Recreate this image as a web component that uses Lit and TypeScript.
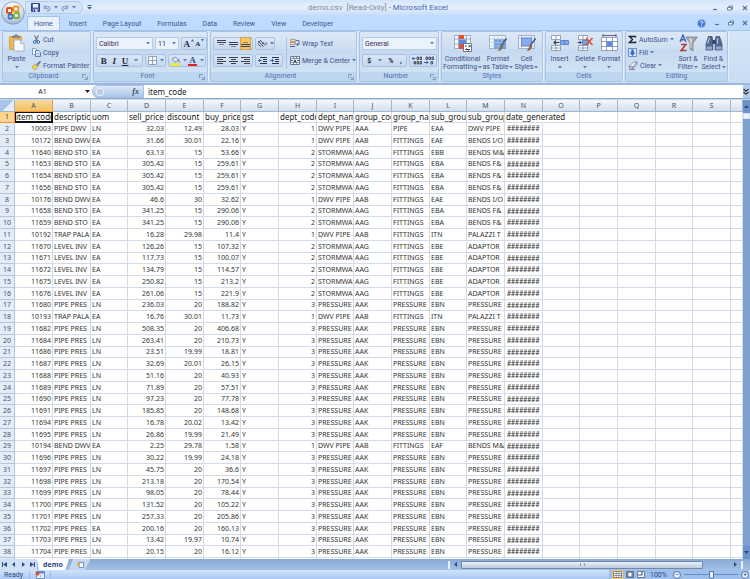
import { LitElement, html, svg, css, nothing } from "lit";
import type { SVGTemplateResult } from "lit";
import { customElement, property } from "lit/decorators.js";
import { classMap } from "lit/directives/class-map.js";

const icon = (w: number, h: number, body: SVGTemplateResult, vb = `0 0 ${w} ${h}`) =>
  html`<svg class="ic" width=${w} height=${h} viewBox=${vb} aria-hidden="true">${body}</svg>`;

const caret = icon(4, 3, svg`<path d="M0 0h4L2 2.6z" fill="#5c7fb5"/>`);
const launcher = icon(6, 6, svg`<path d="M.5 4V.5H4M2.500 2.500l2 2M5.500 2.500v3h-3" fill="none" stroke="#7391bd" stroke-width=".9"/>`);

const icons = {
  office: icon(24, 24, svg`
    <defs><radialGradient id="orb" cx=".5" cy=".25" r=".8"><stop offset="0" stop-color="#fff"/><stop offset=".6" stop-color="#d3dbe8"/><stop offset="1" stop-color="#8fa6c6"/></radialGradient></defs>
    <circle cx="12" cy="12" r="11.300" fill="url(#orb)" stroke="#8298b8" stroke-width=".8"/>
    <rect x="6" y="7" width="5" height="5" rx="1" fill="none" stroke="#e0501c" stroke-width="2"/>
    <rect x="12.500" y="5.500" width="5" height="5" rx="1" fill="none" stroke="#f0952a" stroke-width="1.800"/>
    <rect x="7.500" y="13.500" width="4" height="4" rx="1" fill="none" stroke="#2f78c8" stroke-width="1.800"/>
    <rect x="13" y="12" width="5" height="5" rx="1" fill="none" stroke="#7db03a" stroke-width="1.800"/>
    <path d="M11 10.500h2.500v2.500H11z" fill="#fbd64c"/>`),
  save: icon(9, 9, svg`<path d="M.5.5h8v8h-8z" fill="#5364b8" stroke="#343f8e"/><path d="M2 1h5v3.500H2z" fill="#eef3ff"/><path d="M2.500 6h4v3h-4z" fill="#cdd6ee"/><path d="M3 6.500h1.200V9H3z" fill="#2b3576"/>`),
  undo: icon(8, 8, svg`<path d="M1.500 1v3.500H5M1.800 4C3 1.800 6.700 1.800 6.700 4.500 6.700 6 5.500 7 4 7.200" fill="none" stroke="#93a9cd" stroke-width="1.400"/>`),
  redo: icon(8, 8, svg`<path d="M6.500 1v3.500H3M6.200 4C5 1.800 1.300 1.800 1.300 4.500 1.300 6 2 6.800 3 7.200" fill="none" stroke="#93a9cd" stroke-width="1.400"/>`),
  more: icon(5, 5, svg`<path d="M.5.5h4" stroke="#3c5f9c"/><path d="M0 2h5L2.500 4.600z" fill="#3c5f9c"/>`),
  min: icon(6, 6, svg`<path d="M1 4.500h4" stroke="#5b6f93" stroke-width="1.200"/>`),
  restore: icon(6, 6, svg`<path d="M2 2V1h3.500v3H4.500" fill="none" stroke="#5b6f93" stroke-width=".8"/><path d="M.5 2.500h4v2.500h-4z" fill="#fff" stroke="#5b6f93" stroke-width=".9"/>`),
  close: icon(6, 6, svg`<path d="M1 1l4 4M5 1L1 5" stroke="#5b6f93" stroke-width="1.100"/>`),
  help: icon(9, 9, svg`<circle cx="4.500" cy="4.500" r="4" fill="#3f74d0" stroke="#9dbdec" stroke-width=".8"/><path d="M3.100 3.500c.2-1.600 2.800-1.500 2.700 0 0 .9-1.300 1-1.300 1.900M4.500 6.200v1" fill="none" stroke="#fff" stroke-width="1"/>`),
  paste: icon(17, 18, svg`
    <path d="M1.500 2.500h12v13h-12z" fill="#eeb458" stroke="#d9a24e"/>
    <path d="M4.500 3.500V2h2c0-2 3-2 3 0h2v1.500z" fill="#8d97a8" stroke="#5e6778" stroke-width=".6"/>
    <path d="M6 6h6.500L16 9.500V17H6z" fill="#f6f9ff" stroke="#93a5c6" stroke-width=".7"/>
    <path d="M12.500 6v3.500H16" fill="#d5e1f4" stroke="#93a5c6" stroke-width=".7"/>`),
  cut: icon(9, 9, svg`<path d="M2.500.5L5.500 6M6.500.5L3.500 6" stroke="#5a6a8c" stroke-width="1.100"/><circle cx="2.700" cy="7" r="1.400" fill="none" stroke="#3f67b4"/><circle cx="6.200" cy="7" r="1.400" fill="none" stroke="#3f67b4"/>`),
  copy: icon(9, 9, svg`<path d="M.5.5h3l1.500 1.500v4.500H.5z" fill="#fff" stroke="#5f86c6" stroke-width=".8"/><path d="M3.500 2.500h3L8.500 4.500v4h-5z" fill="#dfeafc" stroke="#3f6ab4" stroke-width=".8"/><path d="M4.500 5.500h3M4.500 7h3" stroke="#6d94d2" stroke-width=".6"/>`),
  painter: icon(9, 9, svg`<path d="M0 5.500L4 3l2 2.500L3.500 9C2 8.500.5 7.500 0 5.500z" fill="#f0cc58" stroke="#a78730" stroke-width=".6"/><path d="M4 3l1.500-1L7 4 6 5.500z" fill="#77829a"/><path d="M6 3l2.500-2.800" stroke="#4d5e83" stroke-width="1.400"/>`),
  borders: icon(9, 9, svg`<path d="M.5.5h8v8h-8z" fill="#f3f7fd" stroke="#8391ad" stroke-width=".8"/><path d="M4.500 0v9M0 4.500h9" stroke="#8391ad" stroke-width=".8"/>`),
  fill: icon(10, 10, svg`<path d="M2 3l3.500-2L8.500 4 5 6.500z" fill="#dde7f5" stroke="#63789d" stroke-width=".8"/><path d="M8 3.500c1.200.7 1.500 1.500 1 3" fill="none" stroke="#4c6694"/><path d="M0 7.500h10v2H0z" fill="#f8f000"/>`),
  alignTop: icon(9, 9, svg`<path d="M0 1.500h9M0 3.500h9" stroke="#3c4250" stroke-width="1.100"/><path d="M2 5.500h5" stroke="#7d8594"/>`),
  alignMid: icon(9, 9, svg`<path d="M0 3.500h9M0 5.500h9" stroke="#3c4250" stroke-width="1.200"/><path d="M2 7.500h5" stroke="#7d8594"/>`),
  alignBot: icon(9, 9, svg`<path d="M0 5.500h9M0 7.500h9" stroke="#3c4250" stroke-width="1.200"/><path d="M2 3.500h5" stroke="#7d8594"/>`),
  left: icon(9, 9, svg`<path d="M0 1.500h9M0 3.500h6M0 5.500h9M0 7.500h6" stroke="#3c4250"/>`),
  center: icon(9, 9, svg`<path d="M0 1.500h9M2 3.500h5M0 5.500h9M2 7.500h5" stroke="#3c4250"/>`),
  right: icon(9, 9, svg`<path d="M0 1.500h9M3 3.500h6M0 5.500h9M3 7.500h6" stroke="#3c4250"/>`),
  orient: icon(10, 9, svg`<path d="M1 2l5 5M3 1l4.500 4.500M1 5l2.500 2.500M1 4.500L4 1M3.500 6.500l3-3" stroke="#3f4858" stroke-width=".9"/><path d="M5 8.500L9.500 4M9.500 6V4H7.500" fill="none" stroke="#6a7384" stroke-width=".8"/>`),
  outdent: icon(10, 9, svg`<path d="M2 1.500h7M5 3.500h4M5 5.500h4M2 7.500h7" stroke="#2e3544"/><path d="M4 4.500H.5M2 3L.5 4.500 2 6" fill="none" stroke="#2f62b8"/>`),
  indent: icon(10, 9, svg`<path d="M2 1.500h7M5 3.500h4M5 5.500h4M2 7.500h7" stroke="#2e3544"/><path d="M0 4.500h3.500M2 3l1.500 1.500L2 6" fill="none" stroke="#2f62b8"/>`),
  wrap: icon(10, 9, svg`<path d="M.5.5h5v2h-5zM.5 3.500h5v2h-5z" fill="#f4d3ae" stroke="#a9826b" stroke-width=".7"/><path d="M0 7.500h5" stroke="#56657f"/><path d="M6 1.500h3v4H7M8 4L6.500 5.500 8 7" fill="none" stroke="#3c68b4" stroke-width=".9"/>`),
  merge: icon(10, 9, svg`<path d="M.5.5h9v8h-9z" fill="#f6f9fe" stroke="#56657f" stroke-width=".8"/><path d="M0 2.500h10M0 6.500h10M3.500 0v2.500M6.500 0v2.500M3.500 6.500V9M6.500 6.500V9" stroke="#56657f" stroke-width=".7"/><path d="M.5 4.500h2.500M7 4.500h2.500" stroke="#2f62b8"/><path d="M5 3l1.500 3h-3z" fill="#2e3544"/>`),
  incDec: icon(10, 9, svg`<path d="M0 2.500h3.500M1.500 1L0 2.500 1.500 4" fill="none" stroke="#2f62b8"/><path d="M5 1h1.500v2.500H5zM8 1h1.500v2.500H8zM2 5.500h1.500V8H2zM5 5.500h1.500V8H5zM8 5.500h1.500V8H8z" fill="none" stroke="#3c4250" stroke-width=".9"/>`),
  decDec: icon(10, 9, svg`<path d="M0 6.500h4M2.500 5L4 6.500 2.500 8" fill="none" stroke="#2f62b8"/><path d="M2 1h1.500v2.500H2zM5 1h1.500v2.500H5zM8 1h1.500v2.500H8zM7 5.500h1.500V8H7z" fill="none" stroke="#3c4250" stroke-width=".9"/>`),
  cond: icon(18, 18, svg`<path d="M.5 1.500h16v13H.5z" fill="#f5f8fd" stroke="#8f9fbd" stroke-width=".8"/><path d="M4.500 1v14M12.500 1v14M0 5h17M0 10h17" stroke="#8f9fbd" stroke-width=".8"/><path d="M5 1h5v4H5zM5 10h6v5H5z" fill="#e5502f"/><path d="M5 5.500h7V10H5z" fill="#5c8be0"/><path d="M9.500 9.500h8v8h-8z" fill="#fff" stroke="#4e5b74" stroke-width=".8"/><path d="M11 12h2M14.500 11l2 1-2 1M11 15.500h5M12 14.500l3 2" fill="none" stroke="#333c4e" stroke-width=".9"/>`),
  fmtTable: icon(18, 18, svg`<path d="M.5 1.500h16v13H.5z" fill="#f5f8fd" stroke="#8f9fbd" stroke-width=".8"/><path d="M5 5h12v10H5z" fill="#6f9be6"/><path d="M5 1v14M9 1v14M13 1v14M0 5h17M0 8.500h17M0 12h17" stroke="#b3c4e2" stroke-width=".8"/><path d="M17.500 4.500L12 12" stroke="#53617e" stroke-width="1.800"/><path d="M13 10.500l1.500 1.500c-1 3.500-3 5-6 5 2-1.500 2-4.500 4.500-6.500z" fill="#8b6a48"/>`),
  cellStyles: icon(18, 18, svg`<path d="M.5 1.500h16v13H.5z" fill="#f5f8fd" stroke="#8f9fbd" stroke-width=".8"/><path d="M3.500 1v14M13.500 1v14M0 4h17M0 12h17" stroke="#a9b8d3" stroke-width=".8"/><path d="M3.500 4h10v8h-10z" fill="#85aaf0" stroke="#5c80c8" stroke-width=".8"/><path d="M17.500 4.500L12 12" stroke="#53617e" stroke-width="1.800"/><path d="M13 10.500l1.500 1.500c-1 3.500-3 5-6 5 2-1.500 2-4.500 4.500-6.500z" fill="#8b6a48"/>`),
  insert: icon(18, 18, svg`<path d="M.5 1.500h9v4h-9zM.5 11.500h9v5h-9z" fill="#fff" stroke="#7f8da8" stroke-width=".8"/><path d="M5 1.500v4M5 11.500v5M.5 14h9" stroke="#7f8da8" stroke-width=".8"/><path d="M9.500 6.500h8v4h-8z" fill="#7ba5ee" stroke="#4f78c2" stroke-width=".8"/><path d="M13.500 6.500v4" stroke="#4f78c2" stroke-width=".6"/><path d="M8.500 8.500H3M5 6.500L3 8.500l2 2" fill="none" stroke="#3c4250" stroke-width="1.100"/>`),
  delete: icon(18, 18, svg`<path d="M2.500 1.500h9v4h-9zM2.500 11.500h9v5h-9z" fill="#fff" stroke="#7f8da8" stroke-width=".8"/><path d="M7 1.500v4M7 11.500v5M2.500 14h9" stroke="#7f8da8" stroke-width=".8"/><path d="M6.500 6.500h6v4h-6z" fill="#7ba5ee" stroke="#4f78c2" stroke-width=".8"/><path d="M1.500 8.500h4M3.500 7l2 1.500-2 1.500" fill="none" stroke="#3c4250"/><path d="M10 4l6.500 7M16.500 4L10 11" stroke="#e24a2c" stroke-width="1.500"/>`),
  format: icon(19, 18, svg`<path d="M1.500 3.500h16v13h-16z" fill="#fff" stroke="#7f8da8" stroke-width=".8"/><path d="M6.500 3v14M12.500 3v14M1 7.500h17M1 12.500h17" stroke="#7f8da8" stroke-width=".8"/><path d="M6.500 7.500h6v5h-6z" fill="#5c8be0"/><path d="M3 1.500h13M3 0v3M16 0v3" stroke="#4e5b74" stroke-width=".9"/>`),
  sigma: icon(9, 9, svg`<path d="M7.500 2.500v-1h-6L4.500 4.500 1.500 7.500h6v-1" fill="none" stroke="#20262f" stroke-width="1.400"/>`),
  fillDown: icon(9, 9, svg`<path d="M.5.500h8v8h-8z" fill="#dce8fb" stroke="#5476b4" stroke-width=".8"/><path d="M3.200 1.500h2.600V4.500h1.700L4.500 8 1.500 4.500h1.700z" fill="#2f6bd0"/>`),
  clear: icon(10, 9, svg`<path d="M1 5.500L5.500 1h3.500L4.500 6z" fill="#f7f8fb" stroke="#6d7890" stroke-width=".8"/><path d="M1 5.500L4.500 6v2H2z" fill="#d7dde8" stroke="#6d7890" stroke-width=".7"/><path d="M4.500 8L9 3.500V1M1 8.500h6" fill="none" stroke="#6d7890" stroke-width=".8"/>`),
  sort: icon(19, 18, svg`<path d="M1 8l3-7 3 7M2 5.700h4" fill="none" stroke="#3b62b4" stroke-width="1.400"/><path d="M2 10.500h5L2 16.500h5.500" fill="none" stroke="#b23a32" stroke-width="1.500"/><path d="M7 3h11.500l-4.500 6v8l-3-2V9z" fill="#a9a6a6" stroke="#77757a" stroke-width=".7"/><path d="M10 4.500h3L12.500 9v5.500l-1-1V8.500z" fill="#e0dfe0"/>`),
  find: icon(18, 18, svg`<path d="M3.500 2.500h3.500l.8 4v9.500H1V10z" fill="#54688f" stroke="#33456b" stroke-width=".7"/><path d="M11 2.500h3.500L17 10v6h-6.800V6.500z" fill="#54688f" stroke="#33456b" stroke-width=".7"/><path d="M7.500 6h3v4h-3z" fill="#33456b"/><path d="M2.500 9.500L4.500 4M12.500 9.500L12.500 4" stroke="#a9bfe4" stroke-width="1.300"/><path d="M1.500 12.500h5.500v3H1.500zM11 12.500h5.500v3H11z" fill="#92aad4"/>`),
  expand: icon(6, 8, svg`<path d="M.5 1L3 3.200 5.500 1M.5 4L3 6.200 5.500 4" fill="none" stroke="#333" stroke-width="1.200"/>`),
  newSheet: icon(10, 8, svg`<path d="M3.500 1.500h5v5h-4z" fill="#fff" stroke="#5b7ab0" stroke-width=".8"/><path d="M1 3l2-.6L3.600.500l.9 1.900 2 .6-2 .8-.9 2L2.800 3.900z" fill="#f0a238"/>`),
  macro: icon(10, 8, svg`<path d="M1.500.5h8v7h-8z" fill="#f4f8ff" stroke="#5b7ab0" stroke-width=".8"/><path d="M1.500.5h8v2h-8z" fill="#5b86cc"/><path d="M5.500 3v4.500M2 5h7" stroke="#9db3d8" stroke-width=".6"/><circle cx="2.500" cy="2.500" r="2" fill="#dd4f38"/>`),
  viewNormal: icon(9, 7, svg`<path d="M.5.5h8v6h-8z" fill="#fff" stroke="#6a7691" stroke-width=".8"/><path d="M3.200 0v7M5.900 0v7M0 2.500h9M0 4.500h9" stroke="#6a7691" stroke-width=".7"/>`),
  viewLayout: icon(8, 7, svg`<path d="M.5.500h7v6h-7z" fill="#7885a0" stroke="#56617b" stroke-width=".8"/><path d="M2.500 1.800h3v3.500h-3z" fill="#fff"/>`),
  viewBreak: icon(8, 7, svg`<path d="M.5.500h7v6h-7z" fill="#fff" stroke="#56617b" stroke-width=".8"/><path d="M.5 4h4.500V.5" fill="none" stroke="#56617b" stroke-width="1.200"/>`),
};

const arrow = (d: string) => icon(5, 5, svg`<path d=${d} fill="#274b8a"/>`);

/* item, description, uom, sell, discount, buy, dept, dept name, group, group name, sub group, sub group name */
const DWV = "DWV PIPE";
const source = `
10003,PIPE DWV,LN,32.03,12.49,28.03,1,${DWV},AAA,PIPE,EAA,DWV PIPE
10172,BEND DWV,EA,31.66,30.01,22.16,1,${DWV},AAB,FITTINGS,EAE,BENDS I/O
11640,BEND STO,EA,63.13,15,53.66,2,STORMWA,AAG,FITTINGS,EBB,BENDS M&F
11653,BEND STO,EA,305.42,15,259.61,2,STORMWA,AAG,FITTINGS,EBA,BENDS F&
11654,BEND STO,EA,305.42,15,259.61,2,STORMWA,AAG,FITTINGS,EBA,BENDS F&
11656,BEND STO,EA,305.42,15,259.61,2,STORMWA,AAG,FITTINGS,EBA,BENDS F&
10176,BEND DWV,EA,46.6,30,32.62,1,${DWV},AAB,FITTINGS,EAE,BENDS I/O
11658,BEND STO,EA,341.25,15,290.06,2,STORMWA,AAG,FITTINGS,EBA,BENDS F&
11659,BEND STO,EA,341.25,15,290.06,2,STORMWA,AAG,FITTINGS,EBA,BENDS F&
10192,TRAP PALA,EA,16.28,29.98,11.4,1,${DWV},AAB,FITTINGS,ITN,PALAZZI T
11670,LEVEL INV,EA,126.26,15,107.32,2,STORMWA,AAG,FITTINGS,EBE,ADAPTOR
11671,LEVEL INV,EA,117.73,15,100.07,2,STORMWA,AAG,FITTINGS,EBE,ADAPTOR
11672,LEVEL INV,EA,134.79,15,114.57,2,STORMWA,AAG,FITTINGS,EBE,ADAPTOR
11675,LEVEL INV,EA,250.82,15,213.2,2,STORMWA,AAG,FITTINGS,EBE,ADAPTOR
11676,LEVEL INV,EA,261.06,15,221.9,2,STORMWA,AAG,FITTINGS,EBE,ADAPTOR
11680,PIPE PRES,LN,236.03,20,188.82
10193,TRAP PALA,EA,16.76,30.01,11.73,1,${DWV},AAB,FITTINGS,ITN,PALAZZI T
11682,PIPE PRES,LN,508.35,20,406.68
11684,PIPE PRES,LN,263.41,20,210.73
11686,PIPE PRES,LN,23.51,19.99,18.81
11687,PIPE PRES,LN,32.69,20.01,26.15
11688,PIPE PRES,LN,51.16,20,40.93
11689,PIPE PRES,LN,71.89,20,57.51
11690,PIPE PRES,LN,97.23,20,77.78
11691,PIPE PRES,LN,185.85,20,148.68
11694,PIPE PRES,LN,16.78,20.02,13.42
11695,PIPE PRES,LN,26.86,19.99,21.49
10194,BEND DWV,EA,2.25,29.78,1.58,1,${DWV},AAB,FITTINGS,EAF,BENDS M&F
11696,PIPE PRES,LN,30.22,19.99,24.18
11697,PIPE PRES,LN,45.75,20,36.6
11698,PIPE PRES,LN,213.18,20,170.54
11699,PIPE PRES,LN,98.05,20,78.44
11700,PIPE PRES,LN,131.52,20,105.22
11701,PIPE PRES,LN,257.33,20,205.86
11702,PIPE PRES,EA,200.16,20,160.13
11703,PIPE PRES,LN,13.42,19.97,10.74
11704,PIPE PRES,LN,20.15,20,16.12`;

const PRESSURE = ["3", "PRESSURE", "AAK", "PRESSURE", "EBN", "PRESSURE"];
const records = source.trim().split("\n").map((line) => {
  const f = line.split(",");
  const rest = f.length > 6 ? f.slice(6) : PRESSURE;
  return [...f.slice(0, 6), "Y", ...rest, "########"];
});
const fields = ["item_code", "description", "uom", "sell_price", "discount", "buy_price", "gst", "dept_code", "dept_name", "group_code", "group_name", "sub_group", "sub_group"];
const numeric = new Set([0, 3, 4, 5, 7]);
const letters = "ABCDEFGHIJKLMNOPQRS".split("");

@customElement("sheet-grid")
class SheetGrid extends LitElement {
  static styles = css`
    :host { display: block; overflow: hidden; background: #fff; font: 7px/11px "Noto Sans", sans-serif; color: #333; }
    table { table-layout: fixed; border-collapse: separate; border-spacing: 0; width: 100%; }
    .c-head { width: 15px; }
    .c-wide { width: 38px; }
    .c-narrow { width: 37px; }
    th, td { box-sizing: border-box; padding: 0 0 0 1px; height: 12px; overflow: hidden; white-space: nowrap; text-align: left; border-right: 1px solid #d3dbea; border-bottom: 1px solid #d3dbea; }
    tbody tr:nth-child(4n + 1) > * { height: 11px; line-height: 10px; }
    th { font-weight: 400; text-align: center; padding: 0; color: #44546c; background: #e4ecf7; border-color: #b4c6de; }
    thead th { background: linear-gradient(#f4f8fd, #d5deec); border-color: #9eb6ce; }
    .corner { background: linear-gradient(135deg, #a9c4e9 55%, #e6eefa 55%); }
    thead .on { background: linear-gradient(#f9d99f, #f1c15f); border-color: #f29536; }
    tbody .on { background: #ffd58d; border-color: #f29536; }
    .num { text-align: right; padding-right: 1px; }
    .date { font-family: Lato, sans-serif; padding-left: 2px; }
    .first td { font-size: 8px; color: #222; }
    .first td.current { box-shadow: inset 0 0 0 1px #111; border-color: #111; }
  `;
  render() {
    return html`<table aria-label="demo">
      <colgroup><col class="c-head">${letters.map((_, i) => html`<col class=${i % 3 === 2 ? "c-narrow" : "c-wide"}>`)}<col></colgroup>
      <thead><tr><th class="corner"></th>${letters.map((l, i) => html`<th scope="col" class=${classMap({ on: i === 0 })}>${l}</th>`)}<th></th></tr></thead>
      <tbody>
        <tr class="first"><th scope="row" class="on">1</th>${fields.map((f, i) => html`<td class=${classMap({ current: i === 0 })}>${f}</td>`)}<td colspan="2">date_generated</td>${this.blanks(5)}</tr>
        ${records.map((r, n) => html`<tr><th scope="row">${n + 2}</th>${r.map((v, i) => html`<td class=${classMap({ num: numeric.has(i), date: i === 13 })}>${v}</td>`)}${this.blanks(6)}</tr>`)}
        <tr><th></th>${this.blanks(20)}</tr>
      </tbody>
    </table>`;
  }
  private blanks(n: number) {
    return Array.from({ length: n }, () => html`<td></td>`);
  }
}

@customElement("ribbon-group")
class RibbonGroup extends LitElement {
  @property() label = "";
  @property({ type: Boolean }) launch = false;
  static styles = css`
    :host { display: flex; flex-direction: column; box-sizing: border-box; height: 51px; flex: none; border: 1px solid #a9c3e4; border-radius: 2px; background: linear-gradient(#dce8f6, #cddff2 35%, #c6d9ef 36%, #d6e5f6); box-shadow: 1px 0 0 #e6effa; }
    .body { flex: 1; display: flex; min-height: 0; }
    .foot { height: 9px; display: flex; align-items: center; background: #bfd6f1; color: #4e73ac; font-size: 7px; line-height: 9px; padding: 0 2px; }
    .name { flex: 1; text-align: center; }
    .go { border: 0; background: none; padding: 0; display: flex; }
  `;
  render() {
    return html`<div class="body"><slot></slot></div>
      <div class="foot"><span class="name">${this.label}</span>${this.launch ? html`<button class="go" aria-label="${this.label} options">${launcher}</button>` : nothing}</div>`;
  }
}

@customElement("app-root")
class AppRoot extends LitElement {
  static styles = css`
    :host { display: flex; flex-direction: column; height: 100vh; overflow: hidden; position: relative; font: 7px/8px Roboto, "Noto Sans", sans-serif; color: #3b4f8c; background: #bfdbff; }
    button { font: inherit; color: inherit; border: 0; background: none; padding: 0; margin: 0; }
    input, select { font: inherit; color: inherit; border: 0; background: none; padding: 0; margin: 0; appearance: none; outline: 0; min-width: 0; }
    .ic { display: block; flex: none; }
    .office { position: absolute; left: 1px; top: 1px; z-index: 1; border-radius: 12px; }

    .title { height: 15px; flex: none; display: flex; align-items: center; padding: 0 2px 0 25px; background: linear-gradient(#d3e5fc, #e4effd 50%, #c8defa); }
    .quick { display: flex; align-items: center; gap: 3px; height: 11px; padding: 0 6px 0 5px; border: 1px solid #b3cbea; border-radius: 0 6px 6px 0; background: #d3e3f8; }
    .more { margin-left: 4px; }
    .caption { flex: 1; text-align: center; padding-right: 48px; font-size: 8px; line-height: 14px; color: #4965a8; white-space: pre; }
    .doc { color: #7f8797; }
    .win { display: flex; gap: 9px; align-items: center; }

    .tabs { height: 15px; flex: none; display: flex; align-items: flex-end; padding: 0 2px 0 27px; background: #bfdbff; border-bottom: 1px solid #a3c2ea; }
    .tab { height: 13px; padding: 0 7px; margin-right: 2px; color: #3d5592; }
    .tab.on { background: #e8f1fb; border: 1px solid #a3c2ea; border-bottom: 0; border-radius: 2px 2px 0 0; height: 14px; padding: 0 6px; }
    .tabs .win { margin-left: auto; height: 14px; gap: 8px; }

    .ribbon { flex: none; display: flex; gap: 2px; padding: 0 2px 1px; background: linear-gradient(#d6e6f8, #c9dcf2); border-bottom: 2px solid #9bb9e0; }
    .g-clip { width: 89px; } .g-font { width: 115px; } .g-align { width: 147px; } .g-num { width: 80px; }
    .g-styles { width: 102px; } .g-cells { width: 78px; } .g-edit { width: 103px; }
    .big { display: flex; flex-direction: column; align-items: center; padding-top: 2px; flex: none; line-height: 8px; }
    .big .lab { margin-top: 3px; text-align: center; }
    .big .ln { display: flex; align-items: center; justify-content: center; gap: 1px; white-space: nowrap; }
    .big > .ic + .lab + .ic { margin-top: 3px; }
    .w24 { width: 24px; } .w27 { width: 27px; } .w30 { width: 30px; } .w41 { width: 41px; }
    .stack { display: flex; flex-direction: column; padding: 1px 0 0 2px; flex: 1; }
    .row { display: flex; align-items: center; gap: 2px; height: 13px; flex: none; white-space: nowrap; }
    .two { display: flex; flex-direction: column; gap: 4px; padding: 5px 2px 0; }
    .two.end { border-left: 1px solid #a9c3e4; padding: 0 0 0 3px; margin: 5px 0 3px 1px; }
    .line { display: flex; gap: 2px; height: 13px; }
    .combo { display: flex; align-items: center; box-sizing: border-box; height: 13px; padding: 0 2px; background: #eaf2fb; border: 1px solid #b5cbe8; color: #432a55; }
    .combo select { flex: 1; }
    .s-font { width: 57px; } .s-size { width: 24px; } .s-num { width: 75px; }
    .strip { display: flex; align-items: center; justify-content: space-around; box-sizing: border-box; height: 13px; border: 1px solid #a9c1e2; border-radius: 2px; background: linear-gradient(#dae6f6, #c5d8ef); padding: 0 1px; }
    .strip > button { display: flex; align-items: center; gap: 3px; height: 11px; }
    .grow { width: 26px; } .biu { width: 47px; } .bord { width: 21px; } .color { width: 38px; }
    .al { width: 40px; } .or { width: 20px; } .in { width: 28px; } .cur { width: 45px; } .dec { width: 28px; }
    .hot { background: #fbc660; box-shadow: 0 0 0 1px #d9a04a; }
    .glyph { font: bold 9px/10px "Liberation Serif", serif; color: #222b3d; }
    .small { font-size: 7px; }
    .tip { align-self: flex-start; margin-top: 1px; }
    .it { font-style: italic; } .un { text-decoration: underline; }
    .red { border-bottom: 2px solid #ee1c1c; line-height: 8px; padding: 0 1px; color: #2f4f94; }
    .pct { font: bold 7px/10px Roboto, sans-serif; color: #222b3d; }

    .formula { flex: none; display: flex; height: 13px; background: #fff; color: #222; font: 8px/13px "Noto Sans", sans-serif; border-bottom: 1px solid #8fa9cc; }
    .name { width: 92px; box-sizing: border-box; padding-right: 2px; display: flex; align-items: center; }
    .name input { flex: 1; text-align: center; font-size: 7px; }
    .fx { width: 52px; box-sizing: border-box; padding: 0 4px 0 3px; display: flex; align-items: center; justify-content: space-between; border-radius: 6px 0 0 6px; border: 1px solid #a9c1e2; background: linear-gradient(#dce9f9, #a8c4ea); }
    .knob { width: 6px; height: 6px; border-radius: 3px; background: #b9cce9; border: 1px solid #e8f1fc; }
    .fn { font: italic bold 8px/10px "Liberation Serif", serif; color: #3d4964; }
    .content { flex: 1; padding: 0 4px; }
    .expand { width: 7px; display: flex; align-items: center; background: #b4cdee; }

    .gap { height: 1px; flex: none; background: #c7d9ef; }
    .work { flex: 1; min-height: 0; display: flex; }
    .work sheet-grid { flex: 1; min-width: 0; }
    .vbar { width: 7px; flex: none; display: flex; flex-direction: column; background: #7f9fcf; }
    .vbar button { height: 13px; display: flex; align-items: center; justify-content: center; background: #6f92c6; }
    .vthumb { height: 6px; border: 1px solid #d5e1f2; background: #eef3fa; box-sizing: border-box; }
    .space { flex: 1; }

    .sheets { flex: none; height: 11px; display: flex; background: linear-gradient(#88a8d5, #a4c0e4); }
    .nav { display: flex; align-items: center; justify-content: space-around; width: 37px; background: #cfe0f5; }
    .sheet { width: 32px; background: #fff; color: #2d4a8a; font: bold 7px/10px "Noto Sans", sans-serif; clip-path: polygon(0 0, 100% 0, 88% 100%, 6% 100%); }
    .add { width: 22px; display: flex; align-items: center; justify-content: center; background: #c3d7f1; clip-path: polygon(18% 0, 100% 0, 70% 100%, 0 100%); }
    .hbar { margin-left: auto; width: 304px; display: flex; align-items: center; padding: 1px 7px 1px 2px; box-sizing: border-box; gap: 1px; }
    .hbar button { width: 9px; display: flex; justify-content: center; }
    .grip { width: 2px; height: 8px; background: #e8f0fb; }
    .hthumb { width: 242px; height: 8px; border: 1px solid #7188ad; border-radius: 1px; background: linear-gradient(#e9f0f8, #bccbe0); display: flex; align-items: center; justify-content: center; box-sizing: border-box; }
    .rib { width: 3px; height: 3px; border: 1px solid #8fa1bf; border-width: 0 1px; }

    .status { flex: none; height: 9px; display: flex; align-items: center; background: linear-gradient(#d2e3fa, #a9c8f2); color: #33487e; padding: 0 1px 0 4px; }
    .status .mac { margin-left: 6px; padding: 0 5px; border-left: 1px solid #9dbae2; border-right: 1px solid #9dbae2; }
    .right { margin-left: auto; display: flex; align-items: center; height: 9px; gap: 3px; padding-left: 3px; background: #9dbfee; }
    .right .hotv { background: #fbc660; padding: 1px; }
    .pc { width: 20px; margin-left: 2px; }
    .round { width: 8px; height: 8px; border-radius: 4px; border: 1px solid #5573a8; background: #eaf2fd; line-height: 6px; box-sizing: border-box; display: flex; align-items: center; justify-content: center; }
    .zoom { width: 54px; height: 8px; background: linear-gradient(#6d8dbf, #6d8dbf) center / 100% 1px no-repeat; }
    .zoom::-webkit-slider-thumb { appearance: none; width: 5px; height: 8px; background: #e9f1fc; border: 1px solid #5573a8; border-radius: 1px 1px 3px 3px; box-sizing: border-box; }
  `;

  private big(cls: string, glyph: unknown, lines: string[], inline = false) {
    return html`<button class="big ${cls}">${glyph}<span class="lab">${lines.map((l, i) =>
      html`<span class="ln">${l}${inline && i === lines.length - 1 ? caret : nothing}</span>`)}</span>${inline ? nothing : caret}</button>`;
  }

  private row(glyph: unknown, text: string, drop = false) {
    return html`<button class="row">${glyph}<span>${text}</span>${drop ? caret : nothing}</button>`;
  }

  private windowButtons() {
    return html`<button aria-label="Minimize">${icons.min}</button><button aria-label="Restore">${icons.restore}</button><button aria-label="Close">${icons.close}</button>`;
  }

  render() {
    const up = icon(3, 3, svg`<path d="M0 2.500h3L1.500 0z" fill="#3f6ab4"/>`);
    const down = icon(3, 3, svg`<path d="M0 0h3L1.500 2.500z" fill="#3f6ab4"/>`);
    return html`
      <button class="office" aria-label="Office Button">${icons.office}</button>
      <header class="title">
        <div class="quick">
          <button aria-label="Save">${icons.save}</button>
          <button aria-label="Undo">${icons.undo}</button>${caret}
          <button aria-label="Redo">${icons.redo}</button>${caret}
        </div>
        <button class="more" aria-label="Customize">${icons.more}</button>
        <div class="caption"><span class="doc">demo.csv  [Read-Only]</span> - Microsoft Excel</div>
        <div class="win">${this.windowButtons()}</div>
      </header>
      <nav class="tabs" role="tablist">
        ${["Home", "Insert", "Page Layout", "Formulas", "Data", "Review", "View", "Developer"].map((t, i) =>
          html`<button role="tab" aria-selected=${i === 0} class=${classMap({ tab: true, on: i === 0 })}>${t}</button>`)}
        <div class="win"><button aria-label="Help">${icons.help}</button>${this.windowButtons()}</div>
      </nav>
      <section class="ribbon">
        <ribbon-group class="g-clip" label="Clipboard" launch>
          ${this.big("w27", icons.paste, ["Paste"])}
          <div class="stack">${this.row(icons.cut, "Cut")}${this.row(icons.copy, "Copy")}${this.row(icons.painter, "Format Painter")}</div>
        </ribbon-group>
        <ribbon-group class="g-font" label="Font" launch>
          <div class="two">
            <div class="line">
              <label class="combo s-font"><select aria-label="Font"><option>Calibri</option></select>${caret}</label>
              <label class="combo s-size"><select aria-label="Font size"><option>11</option></select>${caret}</label>
              <div class="strip grow"><button aria-label="Grow font"><span class="glyph">A</span></button><span class="tip">${up}</span><button aria-label="Shrink font"><span class="glyph small">A</span></button><span class="tip">${down}</span></div>
            </div>
            <div class="line">
              <div class="strip biu"><button class="glyph">B</button><button class="glyph it">I</button><button class="glyph un">U</button>${caret}</div>
              <div class="strip bord"><button aria-label="Borders">${icons.borders}${caret}</button></div>
              <div class="strip color"><button aria-label="Fill color">${icons.fill}${caret}</button><button aria-label="Font color"><span class="glyph red">A</span>${caret}</button></div>
            </div>
          </div>
        </ribbon-group>
        <ribbon-group class="g-align" label="Alignment" launch>
          <div class="two">
            <div class="line">
              <div class="strip al"><button aria-label="Top">${icons.alignTop}</button><button aria-label="Middle">${icons.alignMid}</button><button class="hot" aria-label="Bottom">${icons.alignBot}</button></div>
              <div class="strip or"><button aria-label="Orientation">${icons.orient}${caret}</button></div>
            </div>
            <div class="line">
              <div class="strip al"><button aria-label="Left">${icons.left}</button><button aria-label="Center">${icons.center}</button><button aria-label="Right">${icons.right}</button></div>
              <div class="strip in"><button aria-label="Decrease indent">${icons.outdent}</button><button aria-label="Increase indent">${icons.indent}</button></div>
            </div>
          </div>
          <div class="two end">${this.row(icons.wrap, "Wrap Text")}${this.row(icons.merge, "Merge & Center", true)}</div>
        </ribbon-group>
        <ribbon-group class="g-num" label="Number" launch>
          <div class="two">
            <label class="combo s-num"><select aria-label="Number format"><option>General</option></select>${caret}</label>
            <div class="line">
              <div class="strip cur"><button class="pct">$</button>${caret}<button class="pct">%</button><button class="pct">,</button></div>
              <div class="strip dec"><button aria-label="Increase decimal">${icons.incDec}</button><button aria-label="Decrease decimal">${icons.decDec}</button></div>
            </div>
          </div>
        </ribbon-group>
        <ribbon-group class="g-styles" label="Styles">
          ${this.big("w41", icons.cond, ["Conditional", "Formatting"], true)}
          ${this.big("w30", icons.fmtTable, ["Format", "as Table"], true)}
          ${this.big("w27", icons.cellStyles, ["Cell", "Styles"], true)}
        </ribbon-group>
        <ribbon-group class="g-cells" label="Cells">
          ${this.big("w27", icons.insert, ["Insert"])}
          ${this.big("w24", icons.delete, ["Delete"])}
          ${this.big("w24", icons.format, ["Format"])}
        </ribbon-group>
        <ribbon-group class="g-edit" label="Editing">
          <div class="stack">${this.row(icons.sigma, "AutoSum", true)}${this.row(icons.fillDown, "Fill", true)}${this.row(icons.clear, "Clear", true)}</div>
          ${this.big("w24", icons.sort, ["Sort &", "Filter"], true)}
          ${this.big("w27", icons.find, ["Find &", "Select"], true)}
        </ribbon-group>
      </section>
      <section class="formula">
        <label class="name"><input aria-label="Name box" value="A1">${icon(5, 3, svg`<path d="M0 0h5L2.500 3z" fill="#222"/>`)}</label>
        <div class="fx"><span class="knob"></span><span class="fn">fx</span></div>
        <input class="content" aria-label="Formula" value="item_code">
        <button class="expand" aria-label="Expand formula bar">${icons.expand}</button>
      </section>
      <div class="gap"></div>
      <main class="work">
        <sheet-grid></sheet-grid>
        <div class="vbar"><button aria-label="Scroll up">${arrow("M0 4h5L2.500 1z")}</button><div class="vthumb"></div><div class="space"></div><button aria-label="Scroll down">${arrow("M0 1h5L2.500 4z")}</button></div>
      </main>
      <section class="sheets">
        <div class="nav">
          <button aria-label="First sheet">${arrow("M0 0h1v5H0zM5 0v5L1 2.500z")}</button>
          <button aria-label="Previous sheet">${arrow("M4 0v5L1 2.500z")}</button>
          <button aria-label="Next sheet">${arrow("M1 0v5l3-2.500z")}</button>
          <button aria-label="Last sheet">${arrow("M4 0h1v5H4zM0 0v5l4-2.500z")}</button>
        </div>
        <button class="sheet">demo</button>
        <button class="add" aria-label="Insert worksheet">${icons.newSheet}</button>
        <div class="hbar"><span class="grip"></span><button aria-label="Scroll left">${arrow("M4 0v5L1 2.500z")}</button><div class="hthumb"><span class="rib"></span></div><span class="space"></span><button aria-label="Scroll right">${arrow("M1 0v5l3-2.500z")}</button><span class="grip"></span></div>
      </section>
      <footer class="status">
        <span>Ready</span><button class="mac" aria-label="Record macro">${icons.macro}</button>
        <div class="right">
          <button class="hotv" aria-label="Normal">${icons.viewNormal}</button><button aria-label="Page layout">${icons.viewLayout}</button><button aria-label="Page break">${icons.viewBreak}</button>
          <span class="pc">100%</span>
          <button class="round" aria-label="Zoom out">−</button><input class="zoom" type="range" min="0" max="100" value="50" aria-label="Zoom"><button class="round" aria-label="Zoom in">+</button>
        </div>
      </footer>`;
  }
}
